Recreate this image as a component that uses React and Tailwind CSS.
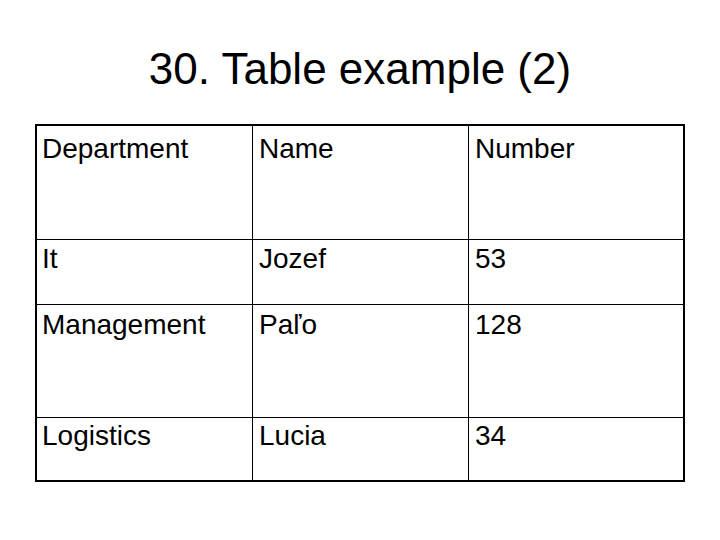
const rows = [
    { cells: ['Department', 'Name', 'Number'], pad: 'pt-[9px]' },
    { cells: ['It', 'Jozef', '53'], pad: 'pt-[5px]' },
    { cells: ['Management', 'Paľo', '128'], pad: 'pt-[6px]' },
    { cells: ['Logistics', 'Lucia', '34'], pad: 'pt-[4px]' },
]

const App = () => {
    return (
        <div className="w-[720px] h-[540px] bg-white text-black font-['Liberation_Sans',Arial,sans-serif]">
            {/* title */}
            <h1 className="pt-[47px] h-[124px] text-center text-[44px] leading-none">30. Table example (2)</h1>

            {/* table */}
            <div className="ml-[35px] w-[650px] h-[358px] border-2 border-black grid grid-cols-[216px_216px_1fr] grid-rows-[114px_65px_113px_1fr]">
                {rows.map((row, r) =>
                    row.cells.map((text, c) => (
                        <div
                            key={r + '-' + c}
                            className={
                                'text-[28px] leading-none border-black ' +
                                row.pad + ' ' +
                                (c === 0 ? 'pl-[5px] ' : 'pl-[6px] ') +
                                (c < 2 ? 'border-r ' : '') +
                                (r < 3 ? 'border-b' : '')
                            }
                        >
                            {text}
                        </div>
                    ))
                )}
            </div>
        </div>
    )
}

export default App
